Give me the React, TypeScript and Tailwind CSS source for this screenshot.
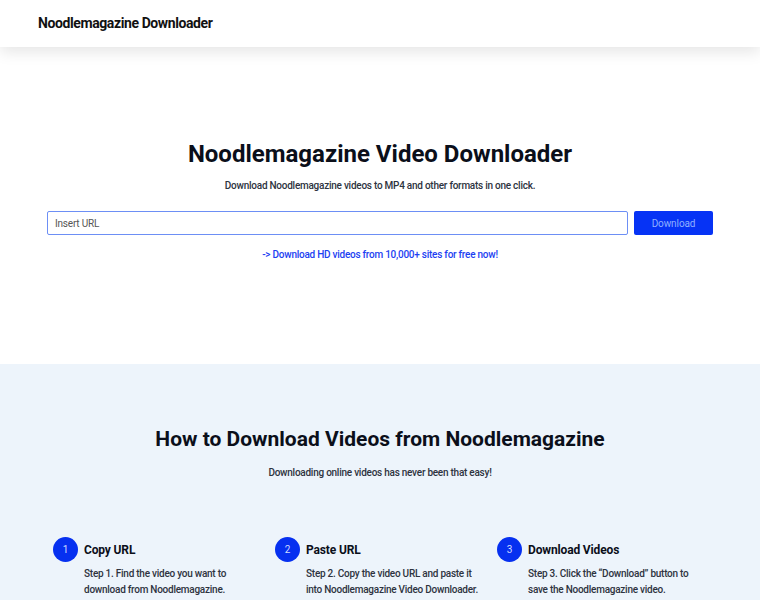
import React from "react";

const steps = [
  { n: "1", title: "Copy URL", lines: ["Step 1. Find the video you want to", "download from Noodlemagazine."] },
  { n: "2", title: "Paste URL", lines: ["Step 2. Copy the video URL and paste it", "into Noodlemagazine Video Downloader."] },
  { n: "3", title: "Download Videos", lines: ["Step 3. Click the \u201cDownload\u201d button to", "save the Noodlemagazine video."] },
];

export default function App() {
  return (
    <div className="min-h-[600px] bg-white font-['Roboto',sans-serif] text-[#111827]">
      <header className="relative z-10 h-[47px] bg-white shadow-[0_5px_14px_rgba(0,0,0,0.1)] flex items-center px-[38px]">
        <span className="text-[14px] font-bold text-[#111] tracking-[-0.4px]">Noodlemagazine Downloader</span>
      </header>

      <section className="h-[317px] bg-white flex flex-col items-center pt-[93px]">
        <h1 className="text-[24px] leading-[28px] font-bold text-[#0b0f1a]">Noodlemagazine Video Downloader</h1>
        <p className="mt-[11px] text-[10px] leading-[14px] tracking-[-0.25px] text-[#2d3340] font-medium">Download Noodlemagazine videos to MP4 and other formats in one click.</p>
        <div className="mt-[18px] flex w-[666px] gap-[6px]">
          <input
            className="h-[24px] flex-1 rounded-[2px] border border-[#6d8ff5] px-[7px] text-[10px] tracking-[-0.2px] text-[#333] placeholder:text-[#555] outline-none"
            placeholder="Insert URL"
          />
          <button className="h-[24px] w-[79px] rounded-[2px] bg-[#0633f5] text-[10px] tracking-[-0.1px] text-[#8fb0ff]">Download</button>
        </div>
        <a className="mt-[13px] text-[10px] leading-[14px] tracking-[-0.25px] font-medium text-[#1d3ff2]">-&gt; Download HD videos from 10,000+ sites for free now!</a>
      </section>

      <section className="h-[236px] bg-[#edf4fb] flex flex-col items-center pt-[62px]">
        <h2 className="text-[21px] leading-[26px] font-bold text-[#0b0f1a]">How to Download Videos from Noodlemagazine</h2>
        <p className="mt-[14px] text-[10px] leading-[14px] tracking-[-0.25px] font-medium text-[#2d3340]">Downloading online videos has never been that easy!</p>
        <div className="mt-[57px] grid w-[666px] grid-cols-3">
          {steps.map((s) => (
            <div key={s.n} className="px-[6px]">
              <div className="flex items-center gap-[6px]">
                <div className="flex h-[25px] w-[25px] items-center justify-center rounded-full bg-[#0630f0] text-[10px] text-[#cfdcff]">{s.n}</div>
                <span className="text-[12px] tracking-[-0.15px] font-bold text-[#0b0f1a]">{s.title}</span>
              </div>
              <div className="mt-[4px] pl-[31px] text-[10px] leading-[16px] tracking-[-0.25px] font-medium text-[#2d3340]">
                {s.lines.map((l) => (
                  <div key={l}>{l}</div>
                ))}
              </div>
            </div>
          ))}
        </div>
      </section>
    </div>
  );
}
